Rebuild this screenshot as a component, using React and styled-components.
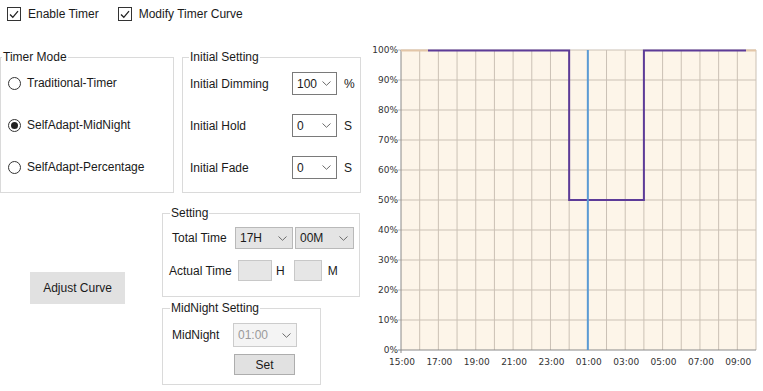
import React from "react";
import styled, { createGlobalStyle } from "styled-components";

const Global = createGlobalStyle`
  html, body { margin: 0; padding: 0; background: #ffffff; }
  body { font-family: "Liberation Sans", Arial, sans-serif; font-size: 12px; color: #1a1a1a; }
  * { box-sizing: border-box; }
`;

const Page = styled.div`
  width: 763px;
  height: 391px;
  overflow: hidden;
  display: flex;
  flex-direction: column;
`;

const TopBar = styled.div`
  height: 40px;
  display: flex;
  align-items: flex-start;
  padding: 7px 0 0 7px;
`;

const CheckLabel = styled.label`
  display: flex;
  align-items: center;
  gap: 7px;
  height: 14px;
  margin-right: ${(p) => p.$mr || 0}px;
  white-space: nowrap;
`;

const Box = styled.span`
  width: 14px;
  height: 14px;
  border: 1px solid #333;
  background: #fff;
  display: flex;
  align-items: center;
  justify-content: center;
`;

const Body = styled.div`
  display: flex;
  flex: 1;
`;

const LeftPanel = styled.div`
  width: 362px;
  display: flex;
  flex-direction: column;
`;

const Row1 = styled.div`
  display: flex;
  gap: 8px;
  padding-top: 10px;
`;

const Group = styled.fieldset`
  margin: 0;
  padding: ${(p) => p.$pad || "0"};
  min-width: 0;
  width: ${(p) => p.$w}px;
  height: ${(p) => p.$h}px;
  border: 1px solid #dadada;
  display: flex;
  flex-direction: column;
  gap: ${(p) => p.$gap || 0}px;
`;

const Legend = styled.legend`
  padding: 0 1px;
  margin-left: ${(p) => p.$ml || 0}px;
  line-height: 14px;
  font-size: 12px;
`;

const RadioRow = styled.label`
  display: flex;
  align-items: center;
  gap: 6px;
  height: 20px;
  white-space: nowrap;
`;

const RadioCircle = styled.span`
  width: 13px;
  height: 13px;
  border-radius: 50%;
  border: 1px solid #333;
  background: #fff;
  display: flex;
  align-items: center;
  justify-content: center;
  &::after {
    content: "";
    width: 7px;
    height: 7px;
    border-radius: 50%;
    background: ${(p) => (p.$on ? "#222" : "transparent")};
  }
`;

const FieldRow = styled.div`
  display: flex;
  align-items: center;
  height: ${(p) => p.$h || 23}px;
  margin-left: ${(p) => p.$indent || 0}px;
  white-space: nowrap;
`;

const FieldLabel = styled.span`
  width: ${(p) => p.$w}px;
  flex: none;
`;

const Unit = styled.span`
  margin-left: ${(p) => p.$ml || 7}px;
  margin-right: ${(p) => p.$mr || 0}px;
`;

const SelectBox = styled.div`
  width: ${(p) => p.$w}px;
  height: ${(p) => p.$h || 23}px;
  margin-left: ${(p) => p.$ml || 0}px;
  flex: none;
  display: flex;
  align-items: center;
  justify-content: space-between;
  padding: 0 5px 0 4px;
  border: 1px solid ${(p) => (p.$kind === "plain" ? "#7a7a7a" : p.$kind === "disabled" ? "#cccccc" : "#b9b9b9")};
  background: ${(p) => (p.$kind === "plain" ? "#ffffff" : p.$kind === "disabled" ? "#f4f4f4" : "#e4e4e4")};
  color: ${(p) => (p.$kind === "disabled" ? "#9a9a9a" : "#1a1a1a")};
`;

const TextBox = styled.div`
  width: ${(p) => p.$w}px;
  height: 21px;
  flex: none;
  background: #e6e6e6;
  border: 1px solid #c8c8c8;
`;

const Row2 = styled.div`
  display: flex;
`;

const ButtonCell = styled.div`
  width: 162px;
  padding: 79px 0 0 30px;
`;

const Button = styled.button`
  width: ${(p) => p.$w}px;
  height: ${(p) => p.$h}px;
  margin-left: ${(p) => p.$ml || 0}px;
  margin-top: ${(p) => p.$mt || 0}px;
  background: #e1e1e1;
  border: 1px solid ${(p) => (p.$bordered ? "#adadad" : "#e1e1e1")};
  font-family: "Liberation Sans", Arial, sans-serif;
  font-size: 12px;
  color: #1a1a1a;
  padding: 0;
`;

const RightColumn = styled.div`
  display: flex;
  flex-direction: column;
  padding-top: 13px;
  gap: 4px;
`;

const ChartWrap = styled.div`
  width: 401px;
  height: 351px;
  background: #ffffff;
`;

const Chevron = () => (
  <svg width="9" height="5" viewBox="0 0 9 5">
    <path d="M0.5 0.5 L4.5 4.3 L8.5 0.5" fill="none" stroke="#6b6b6b" strokeWidth="1" />
  </svg>
);

const Check = () => (
  <svg width="10" height="9" viewBox="0 0 10 9">
    <path d="M1 4.5 L3.8 7.3 L9 1.2" fill="none" stroke="#222" strokeWidth="1.3" />
  </svg>
);

const Select = ({ value, w, h, kind = "plain", ml }) => (
  <SelectBox $w={w} $h={h} $kind={kind} $ml={ml}>
    <span>{value}</span>
    <Chevron />
  </SelectBox>
);

const Chart = () => {
  const X0 = 39;
  const Y0 = 10;
  const W = 355;
  const H = 300;
  const hours = 19;
  const hw = W / hours;
  const xAt = (h) => X0 + h * hw;
  const yAt = (pct) => Y0 + H - (pct / 100) * H;
  const labels = ["15:00", "17:00", "19:00", "21:00", "23:00", "01:00", "03:00", "05:00", "07:00", "09:00"];
  const grid = "#cbc1b5";
  return (
    <svg width="401" height="351" viewBox="0 0 401 351">
      <rect x={X0} y={Y0} width={W} height={H} fill="#fdf5e9" />
      {Array.from({ length: hours }, (_, i) => (
        <line key={"v" + i} x1={xAt(i + 1)} y1={Y0} x2={xAt(i + 1)} y2={Y0 + H} stroke={grid} strokeWidth="1" />
      ))}
      {Array.from({ length: 10 }, (_, i) => (
        <line key={"h" + i} x1={X0 - 3} y1={yAt((i + 1) * 10)} x2={X0 + W} y2={yAt((i + 1) * 10)} stroke={grid} strokeWidth="1" />
      ))}
      <line x1={X0} y1={Y0} x2={X0} y2={Y0 + H + 3} stroke="#8a8a8a" strokeWidth="1" />
      <line x1={X0 - 3} y1={Y0 + H} x2={X0 + W} y2={Y0 + H} stroke="#8a8a8a" strokeWidth="1" />
      {Array.from({ length: 11 }, (_, i) => (
        <text
          key={"yl" + i}
          x={X0 - 3}
          y={yAt(i * 10) + 3}
          textAnchor="end"
          fontFamily="DejaVu Sans, sans-serif"
          fontSize="9"
          fill="#333"
        >
          {i * 10}%
        </text>
      ))}
      {labels.map((l, i) => (
        <text
          key={l}
          x={xAt(i * 2) + 1}
          y={Y0 + H + 15}
          textAnchor="middle"
          fontFamily="DejaVu Sans, sans-serif"
          fontSize="9"
          fill="#333"
        >
          {l}
        </text>
      ))}
      <line x1={X0} y1={Y0 + 0.5} x2={X0 + 27} y2={Y0 + 0.5} stroke="#e3c6a8" strokeWidth="2" />
      <line x1={X0 + W - 10} y1={Y0 + 0.5} x2={X0 + W} y2={Y0 + 0.5} stroke="#e3c6a8" strokeWidth="2" />
      <polyline
        points={`${X0 + 27},${Y0 + 0.5} ${xAt(9)},${Y0 + 0.5} ${xAt(9)},${yAt(50)} ${xAt(13)},${yAt(50)} ${xAt(13)},${Y0 + 0.5} ${X0 + W - 10},${Y0 + 0.5}`}
        fill="none"
        stroke="#5d3b98"
        strokeWidth="2"
      />
      <line x1={xAt(10)} y1={Y0} x2={xAt(10)} y2={Y0 + H} stroke="#5b9bd5" strokeWidth="2" />
    </svg>
  );
};

export default function App() {
  return (
    <>
      <Global />
      <Page>
        <TopBar>
          <CheckLabel $mr={19}>
            <Box>
              <Check />
            </Box>
            Enable Timer
          </CheckLabel>
          <CheckLabel>
            <Box>
              <Check />
            </Box>
            Modify Timer Curve
          </CheckLabel>
        </TopBar>
        <Body>
          <LeftPanel>
            <Row1>
              <Group $w={174} $h={143} $pad="9px 0 0 7px" $gap={22}>
                <Legend $ml={-6}>Timer Mode</Legend>
                <RadioRow>
                  <RadioCircle />
                  Traditional-Timer
                </RadioRow>
                <RadioRow>
                  <RadioCircle $on />
                  SelfAdapt-MidNight
                </RadioRow>
                <RadioRow>
                  <RadioCircle />
                  SelfAdapt-Percentage
                </RadioRow>
              </Group>
              <Group $w={179} $h={143} $pad="8px 0 0 7px" $gap={19}>
                <Legend $ml={-1}>Initial Setting</Legend>
                <FieldRow>
                  <FieldLabel $w={102}>Initial Dimming</FieldLabel>
                  <Select value="100" w={45} />
                  <Unit>%</Unit>
                </FieldRow>
                <FieldRow>
                  <FieldLabel $w={102}>Initial Hold</FieldLabel>
                  <Select value="0" w={45} />
                  <Unit>S</Unit>
                </FieldRow>
                <FieldRow>
                  <FieldLabel $w={102}>Initial Fade</FieldLabel>
                  <Select value="0" w={45} />
                  <Unit>S</Unit>
                </FieldRow>
              </Group>
            </Row1>
            <Row2>
              <ButtonCell>
                <Button $w={95} $h={32}>Adjust Curve</Button>
              </ButtonCell>
              <RightColumn>
                <Group $w={198} $h={91} $pad="7px 0 0 9px" $gap={11}>
                  <Legend $ml={-2}>Setting</Legend>
                  <FieldRow $h={22}>
                    <FieldLabel $w={63}>Total Time</FieldLabel>
                    <Select value="17H" w={58} h={22} kind="flat" />
                    <Select value="00M" w={59} h={22} kind="flat" ml={2} />
                  </FieldRow>
                  <FieldRow $h={21} $indent={-3}>
                    <FieldLabel $w={69}>Actual Time</FieldLabel>
                    <TextBox $w={34} />
                    <Unit $ml={4} $mr={9}>H</Unit>
                    <TextBox $w={28} />
                    <Unit $ml={6}>M</Unit>
                  </FieldRow>
                </Group>
                <Group $w={159} $h={84} $pad="8px 0 0 9px" $gap={0}>
                  <Legend $ml={-2}>MidNight Setting</Legend>
                  <FieldRow $h={24}>
                    <FieldLabel $w={61}>MidNight</FieldLabel>
                    <Select value="01:00" w={64} h={24} kind="disabled" />
                  </FieldRow>
                  <Button $w={61} $h={21} $ml={62} $mt={7} $bordered>
                    Set
                  </Button>
                </Group>
              </RightColumn>
            </Row2>
          </LeftPanel>
          <ChartWrap>
            <Chart />
          </ChartWrap>
        </Body>
      </Page>
    </>
  );
}
